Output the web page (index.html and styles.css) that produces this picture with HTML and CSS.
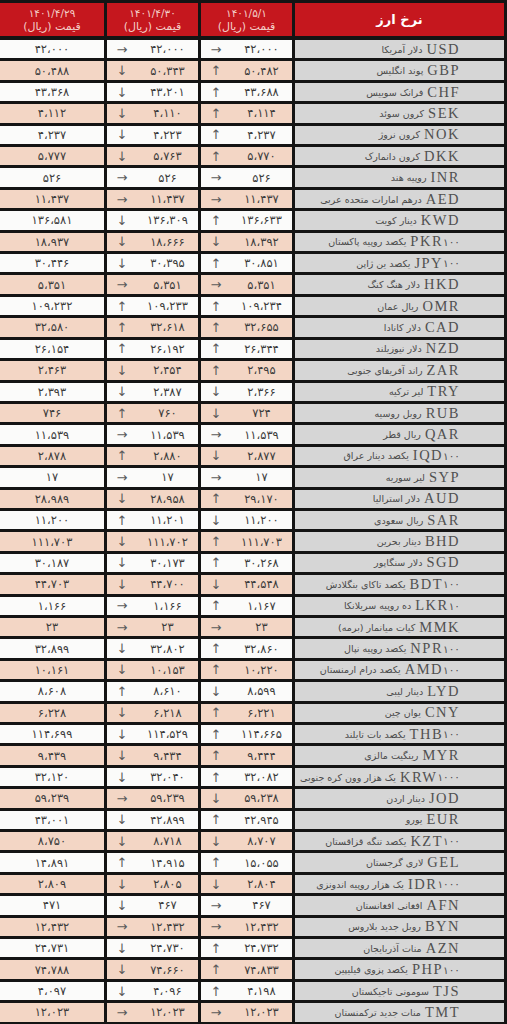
FILE: index.html
```html
<!DOCTYPE html>
<html lang="fa">
<head>
<meta charset="utf-8">
<title>نرخ ارز</title>
<link rel="stylesheet" href="styles.css">
</head>
<body>
<div class="table">
  <div class="row head">
    <div class="cell h"><span>۱۴۰۱/۴/۲۹</span><span>قیمت (ریال)</span></div>
    <div class="cell h"><span>۱۴۰۱/۴/۳۰</span><span>قیمت (ریال)</span></div>
    <div class="cell h"><span>۱۴۰۱/۵/۱</span><span>قیمت (ریال)</span></div>
    <div class="cell h title">نرخ ارز</div>
  </div>

  <div class="row w"><div class="cell v">۴۲،۰۰۰</div><div class="cell a"><i>→</i><b>۴۲،۰۰۰</b></div><div class="cell a"><i>→</i><b>۴۲،۰۰۰</b></div><div class="cell l"><span class="n">دلار آمریکا</span><span class="c">USD</span></div></div>
  <div class="row p"><div class="cell v">۵۰،۴۸۸</div><div class="cell a"><i>↓</i><b>۵۰،۳۴۳</b></div><div class="cell a"><i>↑</i><b>۵۰،۴۸۲</b></div><div class="cell l"><span class="n">پوند انگلیس</span><span class="c">GBP</span></div></div>
  <div class="row w"><div class="cell v">۴۳،۳۶۸</div><div class="cell a"><i>↓</i><b>۴۳،۲۰۱</b></div><div class="cell a"><i>↑</i><b>۴۳،۶۸۸</b></div><div class="cell l"><span class="n">فرانک سوییس</span><span class="c">CHF</span></div></div>
  <div class="row p"><div class="cell v">۴،۱۱۲</div><div class="cell a"><i>↓</i><b>۴،۱۱۰</b></div><div class="cell a"><i>↑</i><b>۴،۱۱۴</b></div><div class="cell l"><span class="n">کرون سوئد</span><span class="c">SEK</span></div></div>
  <div class="row w"><div class="cell v">۴،۲۳۷</div><div class="cell a"><i>↓</i><b>۴،۲۲۳</b></div><div class="cell a"><i>↑</i><b>۴،۲۳۷</b></div><div class="cell l"><span class="n">کرون نروژ</span><span class="c">NOK</span></div></div>
  <div class="row p"><div class="cell v">۵،۷۷۷</div><div class="cell a"><i>↓</i><b>۵،۷۶۳</b></div><div class="cell a"><i>↑</i><b>۵،۷۷۰</b></div><div class="cell l"><span class="n">کرون دانمارک</span><span class="c">DKK</span></div></div>
  <div class="row w"><div class="cell v">۵۲۶</div><div class="cell a"><i>→</i><b>۵۲۶</b></div><div class="cell a"><i>→</i><b>۵۲۶</b></div><div class="cell l"><span class="n">روپیه هند</span><span class="c">INR</span></div></div>
  <div class="row p"><div class="cell v">۱۱،۴۳۷</div><div class="cell a"><i>→</i><b>۱۱،۴۳۷</b></div><div class="cell a"><i>→</i><b>۱۱،۴۳۷</b></div><div class="cell l"><span class="n">درهم امارات متحده عربی</span><span class="c">AED</span></div></div>
  <div class="row w"><div class="cell v">۱۳۶،۵۸۱</div><div class="cell a"><i>↓</i><b>۱۳۶،۳۰۹</b></div><div class="cell a"><i>↑</i><b>۱۳۶،۶۳۳</b></div><div class="cell l"><span class="n">دینار کویت</span><span class="c">KWD</span></div></div>
  <div class="row p"><div class="cell v">۱۸،۹۳۷</div><div class="cell a"><i>↓</i><b>۱۸،۶۶۶</b></div><div class="cell a"><i>↓</i><b>۱۸،۳۹۲</b></div><div class="cell l"><span class="n">یکصد روپیه پاکستان</span><span class="c">PKR</span><span class="d">۱۰۰</span></div></div>
  <div class="row w"><div class="cell v">۳۰،۴۴۶</div><div class="cell a"><i>↓</i><b>۳۰،۳۹۵</b></div><div class="cell a"><i>↑</i><b>۳۰،۸۵۱</b></div><div class="cell l"><span class="n">یکصد ین ژاپن</span><span class="c">JPY</span><span class="d">۱۰۰</span></div></div>
  <div class="row p"><div class="cell v">۵،۳۵۱</div><div class="cell a"><i>→</i><b>۵،۳۵۱</b></div><div class="cell a"><i>→</i><b>۵،۳۵۱</b></div><div class="cell l"><span class="n">دلار هنگ کنگ</span><span class="c">HKD</span></div></div>
  <div class="row w"><div class="cell v">۱۰۹،۲۳۲</div><div class="cell a"><i>↑</i><b>۱۰۹،۲۳۳</b></div><div class="cell a"><i>↑</i><b>۱۰۹،۲۳۴</b></div><div class="cell l"><span class="n">ریال عمان</span><span class="c">OMR</span></div></div>
  <div class="row p"><div class="cell v">۳۲،۵۸۰</div><div class="cell a"><i>↑</i><b>۳۲،۶۱۸</b></div><div class="cell a"><i>↑</i><b>۳۲،۶۵۵</b></div><div class="cell l"><span class="n">دلار کانادا</span><span class="c">CAD</span></div></div>
  <div class="row w"><div class="cell v">۲۶،۱۵۴</div><div class="cell a"><i>↑</i><b>۲۶،۱۹۲</b></div><div class="cell a"><i>↑</i><b>۲۶،۳۴۴</b></div><div class="cell l"><span class="n">دلار نیوزیلند</span><span class="c">NZD</span></div></div>
  <div class="row p"><div class="cell v">۲،۴۶۳</div><div class="cell a"><i>↓</i><b>۲،۴۵۴</b></div><div class="cell a"><i>↑</i><b>۲،۴۹۵</b></div><div class="cell l"><span class="n">راند آفریقای جنوبی</span><span class="c">ZAR</span></div></div>
  <div class="row w"><div class="cell v">۲،۳۹۳</div><div class="cell a"><i>↓</i><b>۲،۳۸۷</b></div><div class="cell a"><i>↓</i><b>۲،۳۶۶</b></div><div class="cell l"><span class="n">لیر ترکیه</span><span class="c">TRY</span></div></div>
  <div class="row p"><div class="cell v">۷۴۶</div><div class="cell a"><i>↑</i><b>۷۶۰</b></div><div class="cell a"><i>↓</i><b>۷۲۴</b></div><div class="cell l"><span class="n">روبل روسیه</span><span class="c">RUB</span></div></div>
  <div class="row w"><div class="cell v">۱۱،۵۳۹</div><div class="cell a"><i>→</i><b>۱۱،۵۳۹</b></div><div class="cell a"><i>→</i><b>۱۱،۵۳۹</b></div><div class="cell l"><span class="n">ریال قطر</span><span class="c">QAR</span></div></div>
  <div class="row p"><div class="cell v">۲،۸۷۸</div><div class="cell a"><i>↑</i><b>۲،۸۸۰</b></div><div class="cell a"><i>↓</i><b>۲،۸۷۷</b></div><div class="cell l"><span class="n">یکصد دینار عراق</span><span class="c">IQD</span><span class="d">۱۰۰</span></div></div>
  <div class="row w"><div class="cell v">۱۷</div><div class="cell a"><i>→</i><b>۱۷</b></div><div class="cell a"><i>→</i><b>۱۷</b></div><div class="cell l"><span class="n">لیر سوریه</span><span class="c">SYP</span></div></div>
  <div class="row p"><div class="cell v">۲۸،۹۸۹</div><div class="cell a"><i>↓</i><b>۲۸،۹۵۸</b></div><div class="cell a"><i>↑</i><b>۲۹،۱۷۰</b></div><div class="cell l"><span class="n">دلار استرالیا</span><span class="c">AUD</span></div></div>
  <div class="row w"><div class="cell v">۱۱،۲۰۰</div><div class="cell a"><i>↑</i><b>۱۱،۲۰۱</b></div><div class="cell a"><i>↓</i><b>۱۱،۲۰۰</b></div><div class="cell l"><span class="n">ریال سعودی</span><span class="c">SAR</span></div></div>
  <div class="row p"><div class="cell v">۱۱۱،۷۰۳</div><div class="cell a"><i>↓</i><b>۱۱۱،۷۰۲</b></div><div class="cell a"><i>↑</i><b>۱۱۱،۷۰۳</b></div><div class="cell l"><span class="n">دینار بحرین</span><span class="c">BHD</span></div></div>
  <div class="row w"><div class="cell v">۳۰،۱۸۷</div><div class="cell a"><i>↓</i><b>۳۰،۱۷۳</b></div><div class="cell a"><i>↑</i><b>۳۰،۲۶۸</b></div><div class="cell l"><span class="n">دلار سنگاپور</span><span class="c">SGD</span></div></div>
  <div class="row p"><div class="cell v">۴۴،۷۰۳</div><div class="cell a"><i>↓</i><b>۴۴،۷۰۰</b></div><div class="cell a"><i>↓</i><b>۴۴،۵۴۸</b></div><div class="cell l"><span class="n">یکصد تاکای بنگلادش</span><span class="c">BDT</span><span class="d">۱۰۰</span></div></div>
  <div class="row w"><div class="cell v">۱،۱۶۶</div><div class="cell a"><i>→</i><b>۱،۱۶۶</b></div><div class="cell a"><i>↑</i><b>۱،۱۶۷</b></div><div class="cell l"><span class="n">ده روپیه سریلانکا</span><span class="c">LKR</span><span class="d">۱۰</span></div></div>
  <div class="row p"><div class="cell v">۲۳</div><div class="cell a"><i>→</i><b>۲۳</b></div><div class="cell a"><i>→</i><b>۲۳</b></div><div class="cell l"><span class="n">کیات میانمار (برمه)</span><span class="c">MMK</span></div></div>
  <div class="row w"><div class="cell v">۳۲،۸۹۹</div><div class="cell a"><i>↓</i><b>۳۲،۸۰۲</b></div><div class="cell a"><i>↑</i><b>۳۲،۸۶۰</b></div><div class="cell l"><span class="n">یکصد روپیه نپال</span><span class="c">NPR</span><span class="d">۱۰۰</span></div></div>
  <div class="row p"><div class="cell v">۱۰،۱۶۱</div><div class="cell a"><i>↓</i><b>۱۰،۱۵۳</b></div><div class="cell a"><i>↑</i><b>۱۰،۲۲۰</b></div><div class="cell l"><span class="n">یکصد درام ارمنستان</span><span class="c">AMD</span><span class="d">۱۰۰</span></div></div>
  <div class="row w"><div class="cell v">۸،۶۰۸</div><div class="cell a"><i>↑</i><b>۸،۶۱۰</b></div><div class="cell a"><i>↓</i><b>۸،۵۹۹</b></div><div class="cell l"><span class="n">دینار لیبی</span><span class="c">LYD</span></div></div>
  <div class="row p"><div class="cell v">۶،۲۲۸</div><div class="cell a"><i>↓</i><b>۶،۲۱۸</b></div><div class="cell a"><i>↑</i><b>۶،۲۲۱</b></div><div class="cell l"><span class="n">یوان چین</span><span class="c">CNY</span></div></div>
  <div class="row w"><div class="cell v">۱۱۴،۶۹۹</div><div class="cell a"><i>↓</i><b>۱۱۴،۵۲۹</b></div><div class="cell a"><i>↑</i><b>۱۱۴،۶۶۵</b></div><div class="cell l"><span class="n">یکصد بات تایلند</span><span class="c">THB</span><span class="d">۱۰۰</span></div></div>
  <div class="row p"><div class="cell v">۹،۴۳۹</div><div class="cell a"><i>↓</i><b>۹،۴۳۴</b></div><div class="cell a"><i>↑</i><b>۹،۴۴۴</b></div><div class="cell l"><span class="n">رینگیت مالزی</span><span class="c">MYR</span></div></div>
  <div class="row w"><div class="cell v">۳۲،۱۲۰</div><div class="cell a"><i>↓</i><b>۳۲،۰۴۰</b></div><div class="cell a"><i>↑</i><b>۳۲،۰۸۲</b></div><div class="cell l"><span class="n">یک هزار وون کره جنوبی</span><span class="c">KRW</span><span class="d">۱۰۰۰</span></div></div>
  <div class="row p"><div class="cell v">۵۹،۲۳۹</div><div class="cell a"><i>→</i><b>۵۹،۲۳۹</b></div><div class="cell a"><i>↓</i><b>۵۹،۲۳۸</b></div><div class="cell l"><span class="n">دینار اردن</span><span class="c">JOD</span></div></div>
  <div class="row w"><div class="cell v">۴۳،۰۰۱</div><div class="cell a"><i>↓</i><b>۴۲،۸۹۹</b></div><div class="cell a"><i>↑</i><b>۴۲،۹۴۵</b></div><div class="cell l"><span class="n">یورو</span><span class="c">EUR</span></div></div>
  <div class="row p"><div class="cell v">۸،۷۵۰</div><div class="cell a"><i>↓</i><b>۸،۷۱۸</b></div><div class="cell a"><i>↓</i><b>۸،۷۰۷</b></div><div class="cell l"><span class="n">یکصد تنگه قزاقستان</span><span class="c">KZT</span><span class="d">۱۰۰</span></div></div>
  <div class="row w"><div class="cell v">۱۴،۸۹۱</div><div class="cell a"><i>↑</i><b>۱۴،۹۱۵</b></div><div class="cell a"><i>↑</i><b>۱۵،۰۵۵</b></div><div class="cell l"><span class="n">لاری گرجستان</span><span class="c">GEL</span></div></div>
  <div class="row p"><div class="cell v">۲،۸۰۹</div><div class="cell a"><i>↓</i><b>۲،۸۰۵</b></div><div class="cell a"><i>↓</i><b>۲،۸۰۴</b></div><div class="cell l"><span class="n">یک هزار روپیه اندونزی</span><span class="c">IDR</span><span class="d">۱۰۰۰</span></div></div>
  <div class="row w"><div class="cell v">۴۷۱</div><div class="cell a"><i>↓</i><b>۴۶۷</b></div><div class="cell a"><i>→</i><b>۴۶۷</b></div><div class="cell l"><span class="n">افغانی افغانستان</span><span class="c">AFN</span></div></div>
  <div class="row p"><div class="cell v">۱۲،۴۳۲</div><div class="cell a"><i>→</i><b>۱۲،۴۳۲</b></div><div class="cell a"><i>→</i><b>۱۲،۴۳۲</b></div><div class="cell l"><span class="n">روبل جدید بلاروس</span><span class="c">BYN</span></div></div>
  <div class="row w"><div class="cell v">۲۴،۷۳۱</div><div class="cell a"><i>↓</i><b>۲۴،۷۳۰</b></div><div class="cell a"><i>↑</i><b>۲۴،۷۳۲</b></div><div class="cell l"><span class="n">منات آذربایجان</span><span class="c">AZN</span></div></div>
  <div class="row p"><div class="cell v">۷۴،۷۸۸</div><div class="cell a"><i>↓</i><b>۷۴،۶۶۰</b></div><div class="cell a"><i>↑</i><b>۷۴،۸۳۳</b></div><div class="cell l"><span class="n">یکصد پزوی فیلیپین</span><span class="c">PHP</span><span class="d">۱۰۰</span></div></div>
  <div class="row w"><div class="cell v">۴،۰۹۷</div><div class="cell a"><i>↓</i><b>۴،۰۹۶</b></div><div class="cell a"><i>↑</i><b>۴،۱۹۸</b></div><div class="cell l"><span class="n">سومونی تاجیکستان</span><span class="c">TJS</span></div></div>
  <div class="row p"><div class="cell v">۱۲،۰۲۳</div><div class="cell a"><i>→</i><b>۱۲،۰۲۳</b></div><div class="cell a"><i>→</i><b>۱۲،۰۲۳</b></div><div class="cell l"><span class="n">منات جدید ترکمنستان</span><span class="c">TMT</span></div></div>
</div>
</body>
</html>
```

FILE: styles.css
```css
html, body {
  margin: 0;
  padding: 0;
  background: #141414;
}
body {
  width: 507px;
  height: 1024px;
  overflow: hidden;
  font-family: "DejaVu Sans", sans-serif;
}
.table {
  display: flex;
  flex-direction: column;
  gap: 3px;
  padding: 3px 3px 0 0;
}
.row {
  display: grid;
  grid-template-columns: 104px 91px 91px 209px;
  column-gap: 3px;
  height: 18.42px;
}
.row.head {
  height: 33px;
  margin-bottom: 1px;
}
.cell {
  display: flex;
  align-items: center;
  justify-content: center;
  overflow: hidden;
  white-space: nowrap;
}
.h {
  background: #c5171e;
  flex-direction: column;
  color: #f4cfc8;
  font-size: 11px;
  line-height: 14px;
}
.h span:first-child {
  font-size: 10.5px;
}
.h.title {
  color: #ffffff;
  font-weight: bold;
  font-size: 13px;
}
.row.w .cell { background: #fbfbfa; }
.row.p .cell { background: #f3d6c5; }
.row .cell.l {
  background: #d6d6d6;
  justify-content: flex-end;
  padding-right: 44px;
  direction: ltr;
  color: #4a4a4a;
}
.v, .a b {
  font-size: 11.5px;
  color: #3c3c3c;
  font-weight: normal;
}
.a {
  justify-content: flex-start;
}
.a i {
  font-style: normal;
  width: 30px;
  text-align: center;
  font-size: 13px;
  color: #5a5a5a;
  flex: none;
}
.a b {
  flex: 1;
  text-align: center;
}
.l .n {
  font-size: 9.5px;
  direction: rtl;
  margin-right: 4px;
}
.l .c {
  font-family: "Liberation Serif", serif;
  font-size: 14.5px;
  letter-spacing: 1.5px;
  color: #505050;
}
.l .d {
  font-size: 10.5px;
  color: #505050;
}
```
